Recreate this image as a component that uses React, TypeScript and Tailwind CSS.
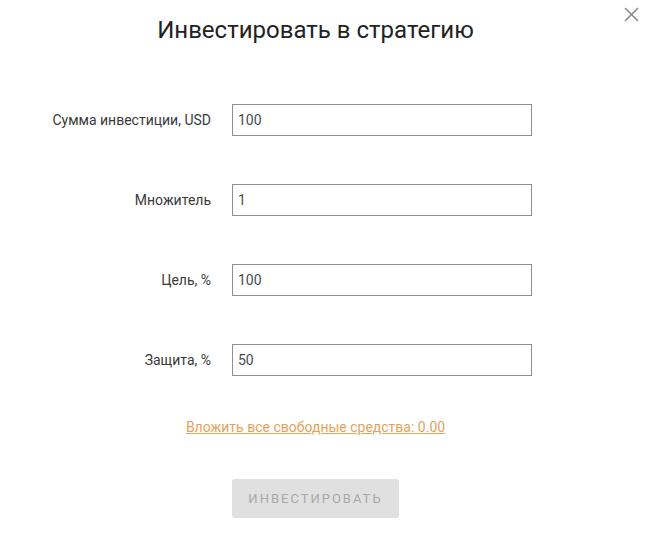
import { useState } from 'react';

const fields = [
  { label: 'Сумма инвестиции, USD', value: '100' },
  { label: 'Множитель', value: '1' },
  { label: 'Цель, %', value: '100' },
  { label: 'Защита, %', value: '50' },
];

const Field = ({ label, initial }: { label: string; initial: string }) => {
  const [value, setValue] = useState(initial);
  return (
    <div className="flex items-center">
      <label className="w-[211px] text-right text-[14px] text-[#3a3a3a]">{label}</label>
      <input
        className="ml-[21px] h-[32px] w-[300px] border border-[#8f8f8f] px-[5px] text-[14px] text-[#4a4a4a] outline-none"
        value={value}
        onChange={(e) => setValue(e.target.value)}
      />
    </div>
  );
};

const App = () => {
  return (
    <div
      className="relative h-[534px] w-[653px] overflow-hidden bg-white"
      style={{ fontFamily: 'Roboto, "Noto Sans", sans-serif' }}
    >
      <button className="absolute right-[14px] top-[7px] text-[#8a8a8a]" aria-label="close">
        <svg width="15" height="15" viewBox="0 0 15 15" fill="none" stroke="currentColor" strokeWidth="1.6">
          <path d="M1 1L14 14M14 1L1 14" />
        </svg>
      </button>

      <div className="flex w-[631px] flex-col items-center">
        <h2 className="mt-[16px] text-[24px] leading-[28px] text-[#222]">Инвестировать в стратегию</h2>

        <div className="mt-[60px] flex w-full flex-col gap-[48px]">
          {fields.map((f) => (
            <Field key={f.label} label={f.label} initial={f.value} />
          ))}
        </div>

        <a href="#" className="mt-[41px] text-[14px] leading-[20px] text-[#e3a35a] underline">
          Вложить все свободные средства: 0.00
        </a>

        <button
          disabled
          className="mt-[42px] h-[39px] w-[167px] rounded-[3px] bg-[#e0e0e0] text-[13px] tracking-[2px] text-[#a9a9a9]"
        >
          ИНВЕСТИРОВАТЬ
        </button>
      </div>
    </div>
  );
};

export default App;
